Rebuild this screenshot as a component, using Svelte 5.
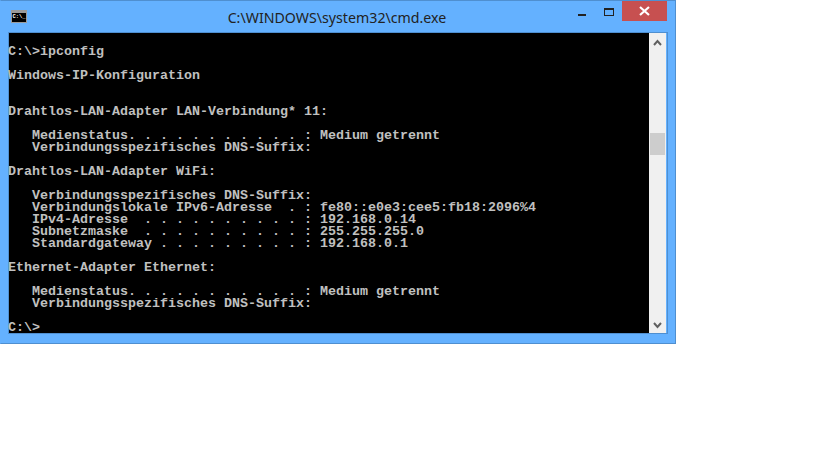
<script>
  const output = `
C:\\>ipconfig

Windows-IP-Konfiguration


Drahtlos-LAN-Adapter LAN-Verbindung* 11:

   Medienstatus. . . . . . . . . . . : Medium getrennt
   Verbindungsspezifisches DNS-Suffix:

Drahtlos-LAN-Adapter WiFi:

   Verbindungsspezifisches DNS-Suffix:
   Verbindungslokale IPv6-Adresse  . : fe80::e0e3:cee5:fb18:2096%4
   IPv4-Adresse  . . . . . . . . . . : 192.168.0.14
   Subnetzmaske  . . . . . . . . . . : 255.255.255.0
   Standardgateway . . . . . . . . . : 192.168.0.1

Ethernet-Adapter Ethernet:

   Medienstatus. . . . . . . . . . . : Medium getrennt
   Verbindungsspezifisches DNS-Suffix:

C:\\>`;
</script>

<div class="window">
  <div class="titlebar">
    <div class="app-icon"><span>C:\_</span></div>
    <div class="title">C:\WINDOWS\system32\cmd.exe</div>
    <div class="controls">
      <div class="min"></div>
      <div class="max"></div>
      <div class="close">
        <svg width="13" height="10" viewBox="0 0 13 10"><path d="M2 1l9 8M11 1l-9 8" stroke="#fff" stroke-width="2.2" fill="none"/></svg>
      </div>
    </div>
  </div>
  <div class="body">
    <div class="console"><pre>{output}</pre></div>
    <div class="scrollbar">
      <svg class="arrow up" width="9" height="7" viewBox="0 0 9 7"><path d="M1 6l3.5-4L8 6" stroke="#606060" stroke-width="2" fill="none"/></svg>
      <div class="track"><div class="thumb"></div></div>
      <svg class="arrow down" width="9" height="7" viewBox="0 0 9 7"><path d="M1 1l3.5 4L8 1" stroke="#606060" stroke-width="2" fill="none"/></svg>
    </div>
  </div>
</div>

<style>
  :global(body) {
    margin: 0;
    background: #fff;
  }

  .window {
    box-sizing: border-box;
    width: 676px;
    height: 344px;
    background: #64b1ff;
    border: 1px solid #4f8fd0;
    border-left-color: #64b1ff;
    display: flex;
    flex-direction: column;
  }

  .titlebar {
    height: 31px;
    display: flex;
    position: relative;
    flex: none;
  }

  .app-icon {
    box-sizing: border-box;
    width: 16px;
    height: 13px;
    margin: 9px 0 0 10px;
    background: #000;
    border: 1px solid #9a9a9a;
    border-top-width: 3px;
    color: #fff;
    font: bold 5.5px/8px "Liberation Mono", monospace;
    text-align: center;
  }

  .title {
    flex: 1;
    text-align: center;
    margin-left: -28px;
    font: 14.2px/33px "Noto Sans", sans-serif;
    color: #222;
  }

  .controls {
    position: absolute;
    top: 0;
    right: 8px;
    display: flex;
  }

  .min {
    width: 8px;
    height: 2px;
    margin: 13px 18px 0 0;
    background: #222;
  }

  .max {
    box-sizing: border-box;
    width: 10px;
    height: 8px;
    margin: 7px 8px 0 0;
    border: 1px solid #222;
    border-top-width: 2px;
  }

  .close {
    width: 45px;
    height: 20px;
    background: #c75050;
    display: flex;
    align-items: center;
    justify-content: center;
  }

  .body {
    display: flex;
    width: 658px;
    margin-left: 7px;
    border: 1px solid #4f8fd0;
  }

  .console {
    width: 640px;
    height: 300px;
    background: #000;
  }

  pre {
    margin: 1px 0 0 -1px;
    color: #c0c0c0;
    font: bold 13.33px/12px "Liberation Mono", monospace;
  }

  .scrollbar {
    width: 17px;
    height: 300px;
    background: #f0f0f0;
    display: flex;
    flex-direction: column;
    align-items: center;
  }

  .arrow {
    flex: none;
  }

  .up {
    margin: 6px 0 5px;
  }

  .down {
    margin: 5px 0 4px;
  }

  .track {
    flex: 1;
    width: 100%;
    padding-top: 82px;
    box-sizing: border-box;
  }

  .thumb {
    width: 15px;
    height: 22px;
    margin: 0 auto;
    background: #cdcdcd;
  }
</style>
